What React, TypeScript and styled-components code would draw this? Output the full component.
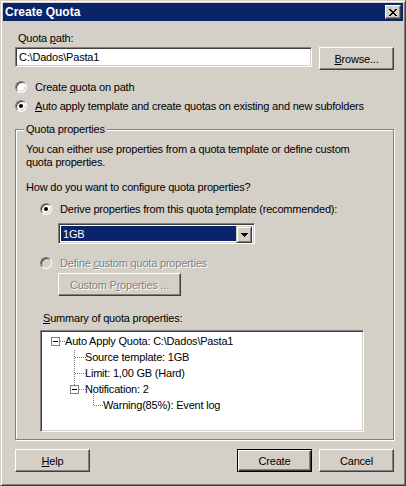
import styled, { createGlobalStyle, css } from "styled-components";

const GlobalStyle = createGlobalStyle`
  html, body {
    margin: 0;
    padding: 0;
    background: #d4d0c8;
  }
  body {
    font-family: "Liberation Sans", Arial, sans-serif;
    font-size: 11px;
    letter-spacing: -0.2px;
    color: #000;
  }
  * {
    box-sizing: border-box;
  }
`;

const Window = styled.div`
  width: 406px;
  height: 486px;
  background: #d4d0c8;
  border: 1px solid;
  border-color: #d4d0c8 #404040 #404040 #d4d0c8;
  box-shadow: inset 1px 1px #fff, inset -1px -1px #808080;
  padding: 2px;
  display: flex;
  flex-direction: column;
`;

const TitleBar = styled.div`
  height: 18px;
  background: #0a246a;
  color: #fff;
  font-weight: bold;
  font-size: 12px;
  letter-spacing: 0;
  display: flex;
  align-items: center;
  justify-content: space-between;
  padding: 0 2px 0 2px;
`;

const CloseButton = styled.div`
  width: 16px;
  height: 14px;
  background: #d4d0c8;
  border: 1px solid;
  border-color: #fff #404040 #404040 #fff;
  box-shadow: inset -1px -1px #808080;
  display: flex;
  align-items: center;
  justify-content: center;
`;

const Body = styled.div`
  padding: 11px 9px 0 12px;
  display: flex;
  flex-direction: column;
  align-items: flex-start;
`;

const Label = styled.div<{ $indent?: number; $top?: number }>`
  line-height: 13px;
  white-space: nowrap;
  margin-left: ${(p) => p.$indent ?? 0}px;
  margin-top: ${(p) => p.$top ?? 0}px;
`;

const U = styled.span`
  text-decoration: underline;
`;

const PathRow = styled.div`
  width: 100%;
  margin-top: 2px;
  display: flex;
  justify-content: space-between;
  align-items: flex-start;
`;

const sunken = css`
  border: 1px solid;
  border-color: #808080 #fff #fff #808080;
  box-shadow: inset 1px 1px #404040, inset -1px -1px #d4d0c8;
`;

const PathInput = styled.div`
  ${sunken};
  width: 297px;
  height: 20px;
  background: #fff;
  padding: 0 3px;
  line-height: 18px;
  white-space: nowrap;
`;

const Button = styled.button<{ $default?: boolean; $width?: number; $disabled?: boolean }>`
  width: ${(p) => p.$width ?? 75}px;
  height: 23px;
  padding: 0;
  background: #d4d0c8;
  font: inherit;
  letter-spacing: inherit;
  color: #000;
  border: 1px solid;
  border-color: #fff #404040 #404040 #fff;
  box-shadow: inset -1px -1px #808080;
  ${(p) =>
    p.$default &&
    css`
      border-color: #000;
      box-shadow: inset 1px 1px #fff, inset -1px -1px #404040, inset -2px -2px #808080;
    `}
  ${(p) =>
    p.$disabled &&
    css`
      color: #808080;
      text-shadow: 1px 1px 0 #fff;
    `}
`;

const RadioRow = styled.div<{ $top: number; $indent?: number; $disabled?: boolean }>`
  height: 16px;
  margin-top: ${(p) => p.$top}px;
  margin-left: ${(p) => p.$indent ?? 0}px;
  display: flex;
  align-items: center;
  gap: 8px;
  white-space: nowrap;
  ${(p) =>
    p.$disabled &&
    css`
      color: #808080;
      text-shadow: 1px 1px 0 #fff;
    `}
`;

const RadioCircle = styled.span<{ $checked?: boolean; $disabled?: boolean }>`
  width: 12px;
  height: 12px;
  flex: none;
  border-radius: 50%;
  background: ${(p) => (p.$disabled ? "#d4d0c8" : "#fff")};
  border: 1px solid;
  border-color: #808080 #fff #fff #808080;
  box-shadow: inset 1px 1px #404040, inset -1px -1px #d4d0c8;
  display: flex;
  align-items: center;
  justify-content: center;
  &::after {
    content: "";
    width: 4px;
    height: 4px;
    border-radius: 50%;
    background: #000;
    display: ${(p) => (p.$checked ? "block" : "none")};
  }
`;

const GroupBox = styled.div`
  width: 379px;
  margin-top: 15px;
  padding: 0 10px 7px 10px;
  border: 1px solid #808080;
  box-shadow: inset 1px 1px #fff, 1px 1px #fff;
  display: flex;
  flex-direction: column;
  align-items: flex-start;
`;

const GroupTitle = styled.span`
  margin: -7px 0 0 -2px;
  padding: 0 2px;
  background: #d4d0c8;
  line-height: 13px;
`;

const Select = styled.div`
  ${sunken};
  width: 197px;
  height: 21px;
  margin: 6px 0 0 32px;
  background: #fff;
  padding: 2px;
  display: flex;
`;

const SelectValue = styled.div`
  flex: 1;
  background: #0a246a;
  color: #fff;
  line-height: 17px;
  padding-left: 2px;
`;

const SelectArrow = styled.div`
  width: 16px;
  height: 17px;
  background: #d4d0c8;
  border: 1px solid;
  border-color: #d4d0c8 #404040 #404040 #d4d0c8;
  box-shadow: inset 1px 1px #fff, inset -1px -1px #808080;
  display: flex;
  align-items: center;
  justify-content: center;
`;

const TreeBox = styled.div`
  ${sunken};
  position: relative;
  width: 324px;
  height: 102px;
  margin: 5px 0 0 14px;
  background: #fff;
  padding-top: 2px;
`;

const TreeLines = styled.svg`
  position: absolute;
  left: 2px;
  top: 2px;
`;

const TreeRow = styled.div<{ $level: number }>`
  height: 16px;
  line-height: 16px;
  white-space: nowrap;
  padding-left: ${(p) => [24, 44, 62][p.$level]}px;
`;

const Footer = styled.div`
  width: 100%;
  margin-top: 9px;
  display: flex;
  gap: 7px;
`;

const Spacer = styled.div`
  flex: 1;
`;

const tree = [
  { level: 0, text: "Auto Apply Quota: C:\\Dados\\Pasta1" },
  { level: 1, text: "Source template: 1GB" },
  { level: 1, text: "Limit: 1,00 GB (Hard)" },
  { level: 1, text: "Notification: 2" },
  { level: 2, text: "Warning(85%): Event log" },
];

const dot = { stroke: "#808080", strokeDasharray: "1 1", shapeRendering: "crispEdges" as const };

const Expander = ({ x, y }: { x: number; y: number }) => (
  <g shapeRendering="crispEdges">
    <rect x={x + 0.5} y={y + 0.5} width={8} height={8} fill="#fff" stroke="#808080" />
    <line x1={x + 2} y1={y + 4.5} x2={x + 7} y2={y + 4.5} stroke="#000" />
  </g>
);

export default function App() {
  return (
    <>
      <GlobalStyle />
      <Window>
        <TitleBar>
          <span>Create Quota</span>
          <CloseButton>
            <svg width="8" height="7" viewBox="0 0 8 7" shapeRendering="crispEdges">
              <path d="M0 0h2v1h-2zM6 0h2v1h-2zM1 1h2v1h-2zM5 1h2v1h-2zM2 2h4v1h-4zM3 3h2v1h-2zM2 4h4v1h-4zM1 5h2v1h-2zM5 5h2v1h-2zM0 6h2v1h-2zM6 6h2v1h-2z" fill="#000" />
            </svg>
          </CloseButton>
        </TitleBar>
        <Body>
          <Label $indent={3}>
            Quota <U>p</U>ath:
          </Label>
          <PathRow>
            <PathInput>C:\Dados\Pasta1</PathInput>
            <Button>
              <U>B</U>rowse...
            </Button>
          </PathRow>
          <RadioRow $top={9}>
            <RadioCircle />
            <span>
              Create <U>q</U>uota on path
            </span>
          </RadioRow>
          <RadioRow $top={3}>
            <RadioCircle $checked />
            <span>
              <U>A</U>uto apply template and create quotas on existing and new subfolders
            </span>
          </RadioRow>
          <GroupBox>
            <GroupTitle>Quota properties</GroupTitle>
            <Label $top={7}>
              You can either use properties from a quota template or define custom
              <br />
              quota properties.
            </Label>
            <Label $top={12}>How do you want to configure quota properties?</Label>
            <RadioRow $top={7} $indent={14}>
              <RadioCircle $checked />
              <span>
                Derive properties from this quota <U>t</U>emplate (recommended):
              </span>
            </RadioRow>
            <Select>
              <SelectValue>1GB</SelectValue>
              <SelectArrow>
                <svg width="7" height="4" viewBox="0 0 7 4" shapeRendering="crispEdges">
                  <path d="M0 0h7v1h-7zM1 1h5v1h-5zM2 2h3v1h-3zM3 3h1v1h-1z" fill="#000" />
                </svg>
              </SelectArrow>
            </Select>
            <RadioRow $top={11} $indent={14} $disabled>
              <RadioCircle $disabled />
              <span>
                Define <U>c</U>ustom quota properties
              </span>
            </RadioRow>
            <Button $width={123} $disabled style={{ marginLeft: 32, marginTop: 2 }}>
              Custom P<U>r</U>operties ...
            </Button>
            <Label $indent={17} $top={16}>
              <U>S</U>ummary of quota properties:
            </Label>
            <TreeBox>
              <TreeLines width="320" height="98">
                <Expander x={8} y={4} />
                <line x1={17} y1={8.5} x2={23} y2={8.5} {...dot} />
                <line x1={31.5} y1={17} x2={31.5} y2={52} {...dot} />
                <line x1={32} y1={24.5} x2={43} y2={24.5} {...dot} />
                <line x1={32} y1={40.5} x2={43} y2={40.5} {...dot} />
                <Expander x={27} y={52} />
                <line x1={36} y1={56.5} x2={43} y2={56.5} {...dot} />
                <line x1={50.5} y1={61} x2={50.5} y2={72} {...dot} />
                <line x1={51} y1={72.5} x2={61} y2={72.5} {...dot} />
              </TreeLines>
              {tree.map((r) => (
                <TreeRow key={r.text} $level={r.level}>
                  {r.text}
                </TreeRow>
              ))}
            </TreeBox>
          </GroupBox>
          <Footer>
            <Button>
              <U>H</U>elp
            </Button>
            <Spacer />
            <Button $default>Create</Button>
            <Button>Cancel</Button>
          </Footer>
        </Body>
      </Window>
    </>
  );
}
